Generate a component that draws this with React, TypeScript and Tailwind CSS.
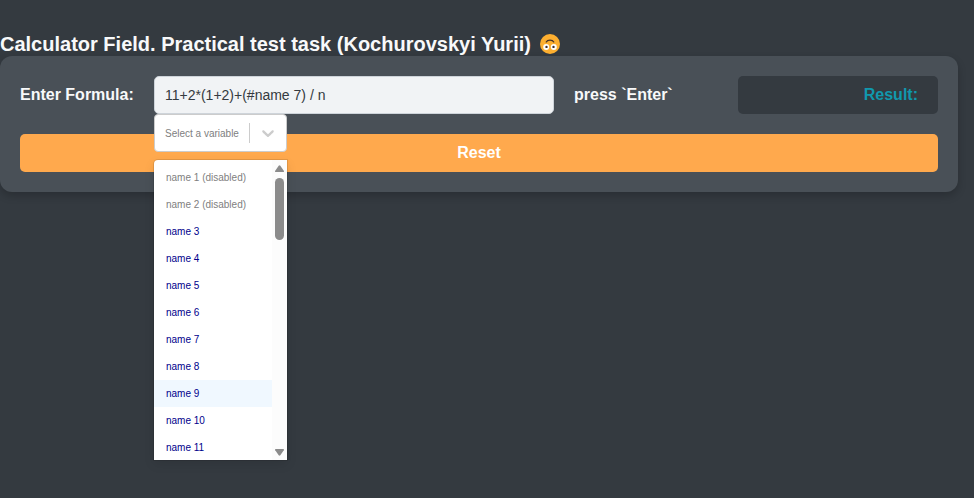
import React from 'react';

const options = Array.from({ length: 11 }, (_, i) => ({
  label: i < 2 ? `name ${i + 1} (disabled)` : `name ${i + 1}`,
  disabled: i < 2,
  focused: i === 8,
}));

function UpsideDownFace() {
  return (
    <svg className="ml-[9px] size-5 shrink-0" viewBox="0 0 20 20" aria-hidden="true">
      <circle cx="10" cy="10" r="10" fill="#fdaf30" />
      <path d="M6.2 8C7.5 5.4 12.5 5.4 13.8 8" fill="none" stroke="#45322c" strokeWidth="1.2" strokeLinecap="round" />
      <circle cx="6.2" cy="12.9" r="3" fill="#fff" />
      <circle cx="13.8" cy="12.9" r="3" fill="#fff" />
      <circle cx="6.5" cy="12.9" r="1.2" fill="#3b2b2b" />
      <circle cx="13.5" cy="12.9" r="1.2" fill="#3b2b2b" />
    </svg>
  );
}

function VariableSelect() {
  return (
    <div className="absolute top-full left-0 w-[133px] text-[10px]">
      <div className="flex h-[38px] items-center rounded border border-[#cccccc] bg-white">
        <span className="flex-1 pl-2.5 whitespace-nowrap text-[#808080]">Select a variable</span>
        <span className="h-[20px] w-px bg-[#cccccc]" />
        <span className="flex w-9 justify-center text-[#cccccc]">
          <svg width="20" height="20" viewBox="0 0 20 20" fill="currentColor">
            <path d="M4.516 7.548c0.436-0.446 1.043-0.481 1.576 0l3.908 3.747 3.908-3.747c0.533-0.481 1.141-0.446 1.574 0 0.436 0.445 0.408 1.197 0 1.615-0.406 0.418-4.695 4.502-4.695 4.502-0.217 0.223-0.502 0.335-0.787 0.335s-0.57-0.112-0.789-0.335c0 0-4.287-4.084-4.695-4.502s-0.436-1.17 0-1.615z" />
          </svg>
        </span>
      </div>
      <div className="mt-2 flex h-[300px] overflow-hidden rounded-tl bg-white shadow-[0_0_0_1px_rgba(0,0,0,0.1),0_4px_11px_rgba(0,0,0,0.1)]">
        <ul className="flex-1 overflow-hidden pt-1">
          {options.map((o) => (
            <li
              key={o.label}
              className={`h-[27px] pl-3 leading-[27px] whitespace-nowrap ${o.disabled ? 'text-[#808080]' : 'text-[#00008b]'} ${o.focused ? 'bg-[#f0f8ff]' : ''}`}
            >
              {o.label}
            </li>
          ))}
        </ul>
        <div className="flex w-[15px] flex-col items-center bg-[#fcfcfc] pt-[5px] pb-1">
          <svg width="9" height="8" viewBox="0.5 0 9 8" fill="#8b8b8b">
            <path d="M4.2 0.7Q5 -.2 5.8 .7L9.3 5.8Q9.8 7 8.8 7H1.2Q.2 7 .7 5.8Z" />
          </svg>
          <div className="mt-[5px] h-[62px] w-[9px] rounded-full bg-[#8b8b8b]" />
          <svg className="mt-auto" width="9" height="8" viewBox="0.5 0 9 8" fill="#8b8b8b">
            <path d="M4.2 7.3Q5 8.2 5.8 7.3L9.3 2.2Q9.8 1 8.8 1H1.2Q.2 1 .7 2.2Z" />
          </svg>
        </div>
      </div>
    </div>
  );
}

export default function App() {
  return (
    <div className="h-[498px] overflow-hidden bg-[#343a40] pt-8 font-['Liberation_Sans',Arial,sans-serif] text-[#f8f9fa]">
      <h1 className="flex h-6 items-center text-[20px] leading-6 font-bold whitespace-nowrap">
        Calculator Field. Practical test task (Kochurovskyi Yurii)
        <UpsideDownFace />
      </h1>
      <main className="flex w-[958px] flex-col gap-5 rounded-xl bg-[#495057] p-5 font-bold shadow-[0_4px_8px_rgba(0,0,0,0.2)]">
        <div className="flex h-[38px] items-center">
          <label className="w-[134px]">Enter Formula:</label>
          <div className="relative z-10 w-[400px] font-normal">
            <input
              className="block h-[38px] w-full rounded-[5px] border border-[#ced4da] bg-[#f1f3f5] px-2.5 text-sm text-[#343a40] outline-none"
              defaultValue="11+2*(1+2)+(#name 7) / n"
            />
            <VariableSelect />
          </div>
          <span className="ml-5">press `Enter`</span>
          <div className="ml-auto flex h-[38px] w-[200px] items-center justify-end rounded-[5px] bg-[#343a40] pr-5 text-[#1098ad]">
            Result:
          </div>
        </div>
        <button className="h-[38px] rounded-[5px] bg-[#ffa94d] text-base text-white">Reset</button>
      </main>
    </div>
  );
}
